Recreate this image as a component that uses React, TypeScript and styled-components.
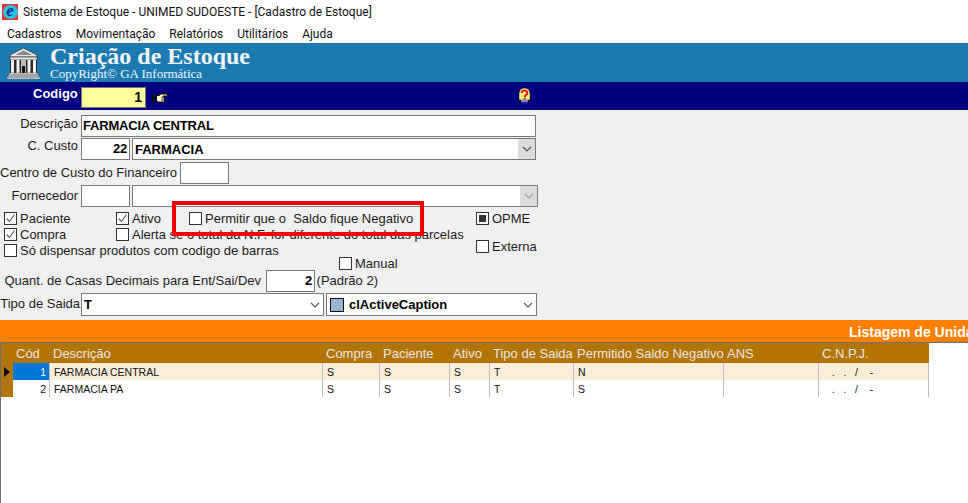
import React from "react"
import styled, {createGlobalStyle} from "styled-components"

const GlobalStyle = createGlobalStyle`
	html, body {
		margin: 0;
		height: 100%;
		background: #fff;
		overflow: hidden;
	}
	body {
		font-family: "Liberation Sans", Arial, sans-serif;
	}
`

const Page = styled.div`
	position: relative;
	width: 968px;
	height: 503px;
	overflow: hidden;
	display: flex;
	flex-direction: column;
	background: #fff;
`

const TitleBar = styled.div`
	height: 24px;
	display: flex;
	align-items: center;
	gap: 5px;
	padding-left: 2px;
	font-family: Roboto, sans-serif;
	font-size: 12px;
	color: #111;
	white-space: nowrap;
`

const AppIcon = styled.div`
	width: 16px;
	height: 16px;
	background: #e8343a;
	display: flex;
	align-items: center;
	justify-content: center;
`

const AppLetter = styled.span`
	width: 15px;
	height: 14px;
	border-radius: 50%;
	background: #25c4d8;
	color: #1a2a9c;
	font: italic bold 17px/12px "Liberation Serif", serif;
	text-align: center;
`

const MenuBar = styled.div`
	height: 19px;
	display: flex;
	align-items: center;
	gap: 14px;
	padding-left: 7px;
	font-family: Roboto, sans-serif;
	font-size: 12px;
	color: #111;
`

const Banner = styled.div`
	height: 39px;
	background: #1b7bb1;
	display: flex;
	align-items: center;
	gap: 10px;
	padding-left: 7px;
	box-sizing: border-box;
`

const BannerText = styled.div`
	display: flex;
	flex-direction: column;
	color: #f2f5f7;
	font-family: "Liberation Serif", serif;
	margin-top: -1px;
`

const BannerTitle = styled.div`
	font-weight: bold;
	font-size: 24px;
	line-height: 23px;
	white-space: nowrap;
`

const BannerSub = styled.div`
	font-size: 13px;
	line-height: 12px;
	white-space: nowrap;
`

const CodeBar = styled.div`
	height: 28px;
	background: #000080;
	display: flex;
	align-items: flex-start;
	padding-left: 33px;
	box-sizing: border-box;
`

const CodeLabel = styled.span`
	color: #fff;
	font-weight: bold;
	font-size: 13px;
	line-height: 15px;
	width: 48px;
	margin-top: 4px;
`

const CodeInput = styled.div`
	width: 65px;
	height: 21px;
	margin-top: 5px;
	box-sizing: border-box;
	background: #ffff99;
	border: 1px solid #7a7a7a;
	color: #000;
	font-weight: bold;
	font-size: 14px;
	line-height: 19px;
	text-align: right;
	padding-right: 3px;
`

const HandIcon = styled.svg`
	margin-left: 6px;
	margin-top: 11px;
`

const HelpIcon = styled.svg`
	margin-left: 349px;
	margin-top: 5px;
`

const Form = styled.div`
	position: relative;
	height: 210px;
	background: #f0f0f0;
	box-sizing: border-box;
	padding-top: 5px;
	color: #1c1c1c;
	font-size: 13px;
	display: flex;
	flex-direction: column;
`

const Row = styled.div<{ $height: number }>`
	height: ${({$height}) => $height}px;
	display: flex;
	align-items: flex-start;
	white-space: nowrap;
`

const Label = styled.div<{ $width: number, $top?: number, $pad?: number }>`
	width: ${({$width}) => $width}px;
	flex-shrink: 0;
	box-sizing: border-box;
	text-align: right;
	padding-right: ${({$pad}) => $pad ?? 3}px;
	padding-top: ${({$top}) => $top ?? 1}px;
	line-height: 15px;
`

const Field = styled.div<{ $width: number, $height?: number, $right?: boolean }>`
	width: ${({$width}) => $width}px;
	height: ${({$height}) => $height ?? 22}px;
	flex-shrink: 0;
	box-sizing: border-box;
	background: #fff;
	border: 1px solid #7a7a7a;
	color: #000;
	font-weight: bold;
	font-size: 13px;
	letter-spacing: -0.2px;
	line-height: 19px;
	padding: 0 2px 0 1px;
	text-align: ${({$right}) => $right ? "right" : "left"};
`

const Combo = styled.div<{ $width: number, $height?: number, $gap?: number }>`
	width: ${({$width}) => $width}px;
	height: ${({$height}) => $height ?? 22}px;
	margin-left: ${({$gap}) => $gap ?? 2}px;
	flex-shrink: 0;
	box-sizing: border-box;
	display: flex;
	align-items: center;
	gap: 5px;
	background: #fff;
	border: 1px solid #7a7a7a;
	color: #000;
	font-weight: bold;
	font-size: 13px;
	padding-left: 2px;
`

const ComboText = styled.span`
	flex: 1;
`

const ComboButton = styled.div<{ $shaded?: boolean }>`
	width: 17px;
	align-self: stretch;
	display: flex;
	align-items: center;
	justify-content: center;
	background: ${({$shaded}) => $shaded ? "#dcdcdc" : "transparent"};
`

const ColorSwatch = styled.span`
	width: 12px;
	height: 12px;
	margin-left: 1px;
	background: #99b4d1;
	border: 1px solid #111;
`

const Chevron = ({color = "#555"}: { color?: string }) => (
	<svg width="10" height="6" viewBox="0 0 10 6" fill="none">
		<path d="M1 1l4 4 4-4" stroke={color} strokeWidth="1.1"/>
	</svg>
)

const Options = styled.div`
	display: flex;
	height: 61px;
	margin-top: 4px;
	margin-bottom: -2px;
`

const OptionsLeft = styled.div`
	width: 476px;
	flex-shrink: 0;
	display: flex;
	flex-direction: column;
`

const OptionsRight = styled.div`
	display: flex;
	flex-direction: column;
	gap: 13px;
`

const OptionRow = styled.div<{ $height: number, $indent?: number }>`
	height: ${({$height}) => $height}px;
	display: flex;
	align-items: flex-start;
	padding-left: ${({$indent}) => $indent ?? 4}px;
	white-space: nowrap;
`

const Check = styled.label<{ $width?: number }>`
	display: flex;
	align-items: center;
	gap: 3px;
	height: 15px;
	line-height: 15px;
	white-space: pre;
	width: ${({$width}) => $width ? `${$width}px` : "auto"};
	flex-shrink: 0;
`

const Tick = styled.span`
	width: 11px;
	height: 11px;
	flex-shrink: 0;
	background: #fff;
	border: 1px solid #333;
	display: flex;
	align-items: center;
	justify-content: center;
`

const Mark = styled.span`
	width: 7px;
	height: 7px;
	background: #333;
`

const CheckBox = ({label, width, state}: { label: string, width?: number, state?: "tick" | "fill" }) => (
	<Check $width={width}>
		<Tick>
			{state === "tick" && (
				<svg width="11" height="11" viewBox="0 0 11 11" fill="none">
					<path d="M1.500 5.500l3 3 5-7" stroke="#555" strokeWidth="1.100"/>
				</svg>
			)}
			{state === "fill" && <Mark/>}
		</Tick>
		{label}
	</Check>
)

const RedFrame = styled.div`
	position: absolute;
	left: 172px;
	top: 91px;
	width: 252px;
	height: 35px;
	box-sizing: border-box;
	border: 4px solid #f00000;
	pointer-events: none;
`

const OrangeBar = styled.div`
	height: 22px;
	background: #ff8000;
	color: #fff;
	font-weight: bold;
	font-size: 14px;
	line-height: 25px;
	white-space: nowrap;
	padding-left: 849px;
	overflow: hidden;
`

const TableArea = styled.div`
	flex: 1;
	border-top: 1px solid #6e6e6e;
	border-left: 1px solid #6e6e6e;
	background: #fff;
`

const TableGrid = styled.div`
	width: 929px;
	display: grid;
	grid-template-columns: 12px 37px 273px 57px 70px 40px 84px 150px 95px 110px;
`

const HeadCell = styled.div`
	height: 20px;
	background: #b37400;
	color: #e8e8e8;
	font-size: 13px;
	line-height: 21px;
	padding-left: 3px;
	white-space: nowrap;
`

const Cell = styled.div<{ $shade: boolean, $right?: boolean, $active?: boolean }>`
	height: 17px;
	box-sizing: border-box;
	background: ${({$shade, $active}) => $active ? "#0078d7" : $shade ? "#fbeed9" : "#fff"};
	color: ${({$active}) => $active ? "#fff" : "#111"};
	border-right: 1px solid #bcbcbc;
	font-size: 10.5px;
	line-height: 18px;
	padding: 0 ${({$right}) => $right ? "3px" : "0"} 0 ${({$right}) => $right ? "0" : "4px"};
	text-align: ${({$right}) => $right ? "right" : "left"};
	white-space: pre;
`

const Indicator = styled.div`
	height: 17px;
	background: #b37400;
	display: flex;
	align-items: center;
	padding-left: 3px;
`

const columns = ["Cód", "Descrição", "Compra", "Paciente", "Ativo", "Tipo de Saida", "Permitido Saldo Negativo", "ANS", "C.N.P.J."]

const rows = [
	{cod: "1", desc: "FARMACIA CENTRAL", negative: "N"},
	{cod: "2", desc: "FARMACIA PA", negative: "S"}
]

const App = () => (
	<Page>
		<GlobalStyle/>
		<TitleBar>
			<AppIcon><AppLetter>e</AppLetter></AppIcon>
			Sistema de Estoque - UNIMED SUDOESTE - [Cadastro de Estoque]
		</TitleBar>
		<MenuBar>
			<span>Cadastros</span>
			<span>Movimentação</span>
			<span>Relatórios</span>
			<span>Utilitários</span>
			<span>Ajuda</span>
		</MenuBar>
		<Banner>
			<svg width="33" height="32" viewBox="0 0 33 32">
				<path d="M16.500 1L30 8v2H3V8z" fill="#e4e4e4" stroke="#333" strokeWidth=".8"/>
				<path d="M16.500 3.500L25 8H8z" fill="#888"/>
				<rect x="3" y="10" width="27" height="3" fill="#ddd" stroke="#333" strokeWidth=".6"/>
				<rect x="3" y="13" width="27" height="13" fill="#2a2a2a"/>
				<path d="M4 13h3v13H4zM9.500 13h3v13h-3zM20.500 13h3v13h-3zM26 13h3v13h-3z" fill="#eee"/>
				<path d="M14 13h5v13h-5z" fill="#bbb"/>
				<rect x="15" y="19" width="3" height="7" fill="#111"/>
				<path d="M2 26h29v2H2zM1 28h31v2H1zM0 30h33v2H0z" fill="#ddd" stroke="#444" strokeWidth=".4"/>
			</svg>
			<BannerText>
				<BannerTitle>Criação de Estoque</BannerTitle>
				<BannerSub>CopyRight© GA Informática</BannerSub>
			</BannerText>
		</Banner>
		<CodeBar>
			<CodeLabel>Codigo</CodeLabel>
			<CodeInput>1</CodeInput>
			<HandIcon width="16" height="11" viewBox="0 0 16 11">
				<path d="M0 1h2v9H0zM3 1h1v9H3z" fill="#111"/>
				<path d="M4.500 2.500H7l2-1.500h6.500v2H11v1h1.500v5H6.500l-2-1z" fill="#ffffc0" stroke="#111"/>
				<path d="M9 5h3M9 7h3" stroke="#111" strokeWidth=".8"/>
			</HandIcon>
			<HelpIcon width="15" height="17" viewBox="0 0 15 17">
				<path d="M7.500 1C11.500 1 13 4 13 7.500V13H2V7.500C2 4 3.500 1 7.500 1z" fill="#f6ea80" stroke="#222" strokeWidth=".5"/>
				<path d="M4.700 6c0-3.600 5.600-3.600 5.600 0 0 2-2.500 2-2.500 4M7.800 10.800v1.800" fill="none" stroke="#e01010" strokeWidth="1.800"/>
				<path d="M1 12.500l3 .5v1.500H1zM14 12.500l-3 .5v1.500h3z" fill="#111"/>
				<path d="M4 13.500h7v1H4z" fill="#fff"/>
				<path d="M5 15.800h5" stroke="#1030d0" strokeWidth="1.500"/>
			</HelpIcon>
		</CodeBar>
		<Form>
			<Row $height={23}>
				<Label $width={81}>Descrição</Label>
				<Field $width={455}>FARMACIA CENTRAL</Field>
			</Row>
			<Row $height={24}>
				<Label $width={81} $top={0}>C. Custo</Label>
				<Field $width={49} $right>22</Field>
				<Combo $width={404}>
					<ComboText>FARMACIA</ComboText>
					<ComboButton $shaded><Chevron/></ComboButton>
				</Combo>
			</Row>
			<Row $height={23}>
				<Label $width={180} $top={3}>Centro de Custo do Financeiro</Label>
				<Field $width={49}/>
			</Row>
			<Row $height={22}>
				<Label $width={81} $top={3}>Fornecedor</Label>
				<Field $width={49}/>
				<Combo $width={406}>
					<ComboText/>
					<ComboButton $shaded><Chevron color="#999"/></ComboButton>
				</Combo>
			</Row>
			<Options>
				<OptionsLeft>
					<OptionRow $height={16}>
						<CheckBox label="Paciente" width={112} state="tick"/>
						<CheckBox label="Ativo" width={73} state="tick"/>
						<CheckBox label="Permitir que o  Saldo fique Negativo"/>
					</OptionRow>
					<OptionRow $height={16}>
						<CheckBox label="Compra" width={112} state="tick"/>
						<CheckBox label="Alerta se o total da N.F. for diferente do total das parcelas"/>
					</OptionRow>
					<OptionRow $height={13}>
						<CheckBox label="Só dispensar produtos com codigo de barras"/>
					</OptionRow>
					<OptionRow $height={15} $indent={339}>
						<CheckBox label="Manual"/>
					</OptionRow>
				</OptionsLeft>
				<OptionsRight>
					<CheckBox label="OPME" state="fill"/>
					<CheckBox label="Externa"/>
				</OptionsRight>
			</Options>
			<Row $height={23}>
				<Label $width={266} $top={3} $pad={5}>Quant. de Casas Decimais para Ent/Sai/Dev</Label>
				<Field $width={49} $right>2</Field>
				<Label $width={66} $top={3}>(Padrão 2)</Label>
			</Row>
			<Row $height={23}>
				<Label $width={81} $top={3} $pad={1}>Tipo de Saida</Label>
				<Combo $width={243} $height={23} $gap={0}>
					<ComboText>T</ComboText>
					<ComboButton><Chevron/></ComboButton>
				</Combo>
				<Combo $width={211} $height={23}>
					<ColorSwatch/>
					<ComboText>clActiveCaption</ComboText>
					<ComboButton><Chevron/></ComboButton>
				</Combo>
			</Row>
			<RedFrame/>
		</Form>
		<OrangeBar>Listagem de Unidades</OrangeBar>
		<TableArea>
			<TableGrid>
				<HeadCell/>
				{columns.map(name => <HeadCell key={name}>{name}</HeadCell>)}
				{rows.map((row, index) => {
					const shade = index === 0
					return (
						<React.Fragment key={row.cod}>
							<Indicator>
								{shade && (
									<svg width="6" height="10" viewBox="0 0 6 10">
										<path d="M0 0l6 5-6 5z" fill="#111"/>
									</svg>
								)}
							</Indicator>
							<Cell $shade={shade} $active={shade} $right>{row.cod}</Cell>
							<Cell $shade={shade}>{row.desc}</Cell>
							<Cell $shade={shade}>S</Cell>
							<Cell $shade={shade}>S</Cell>
							<Cell $shade={shade}>S</Cell>
							<Cell $shade={shade}>T</Cell>
							<Cell $shade={shade}>{row.negative}</Cell>
							<Cell $shade={shade}/>
							<Cell $shade={shade}>{"   .   .   /    -"}</Cell>
						</React.Fragment>
					)
				})}
			</TableGrid>
		</TableArea>
	</Page>
)

export default App
